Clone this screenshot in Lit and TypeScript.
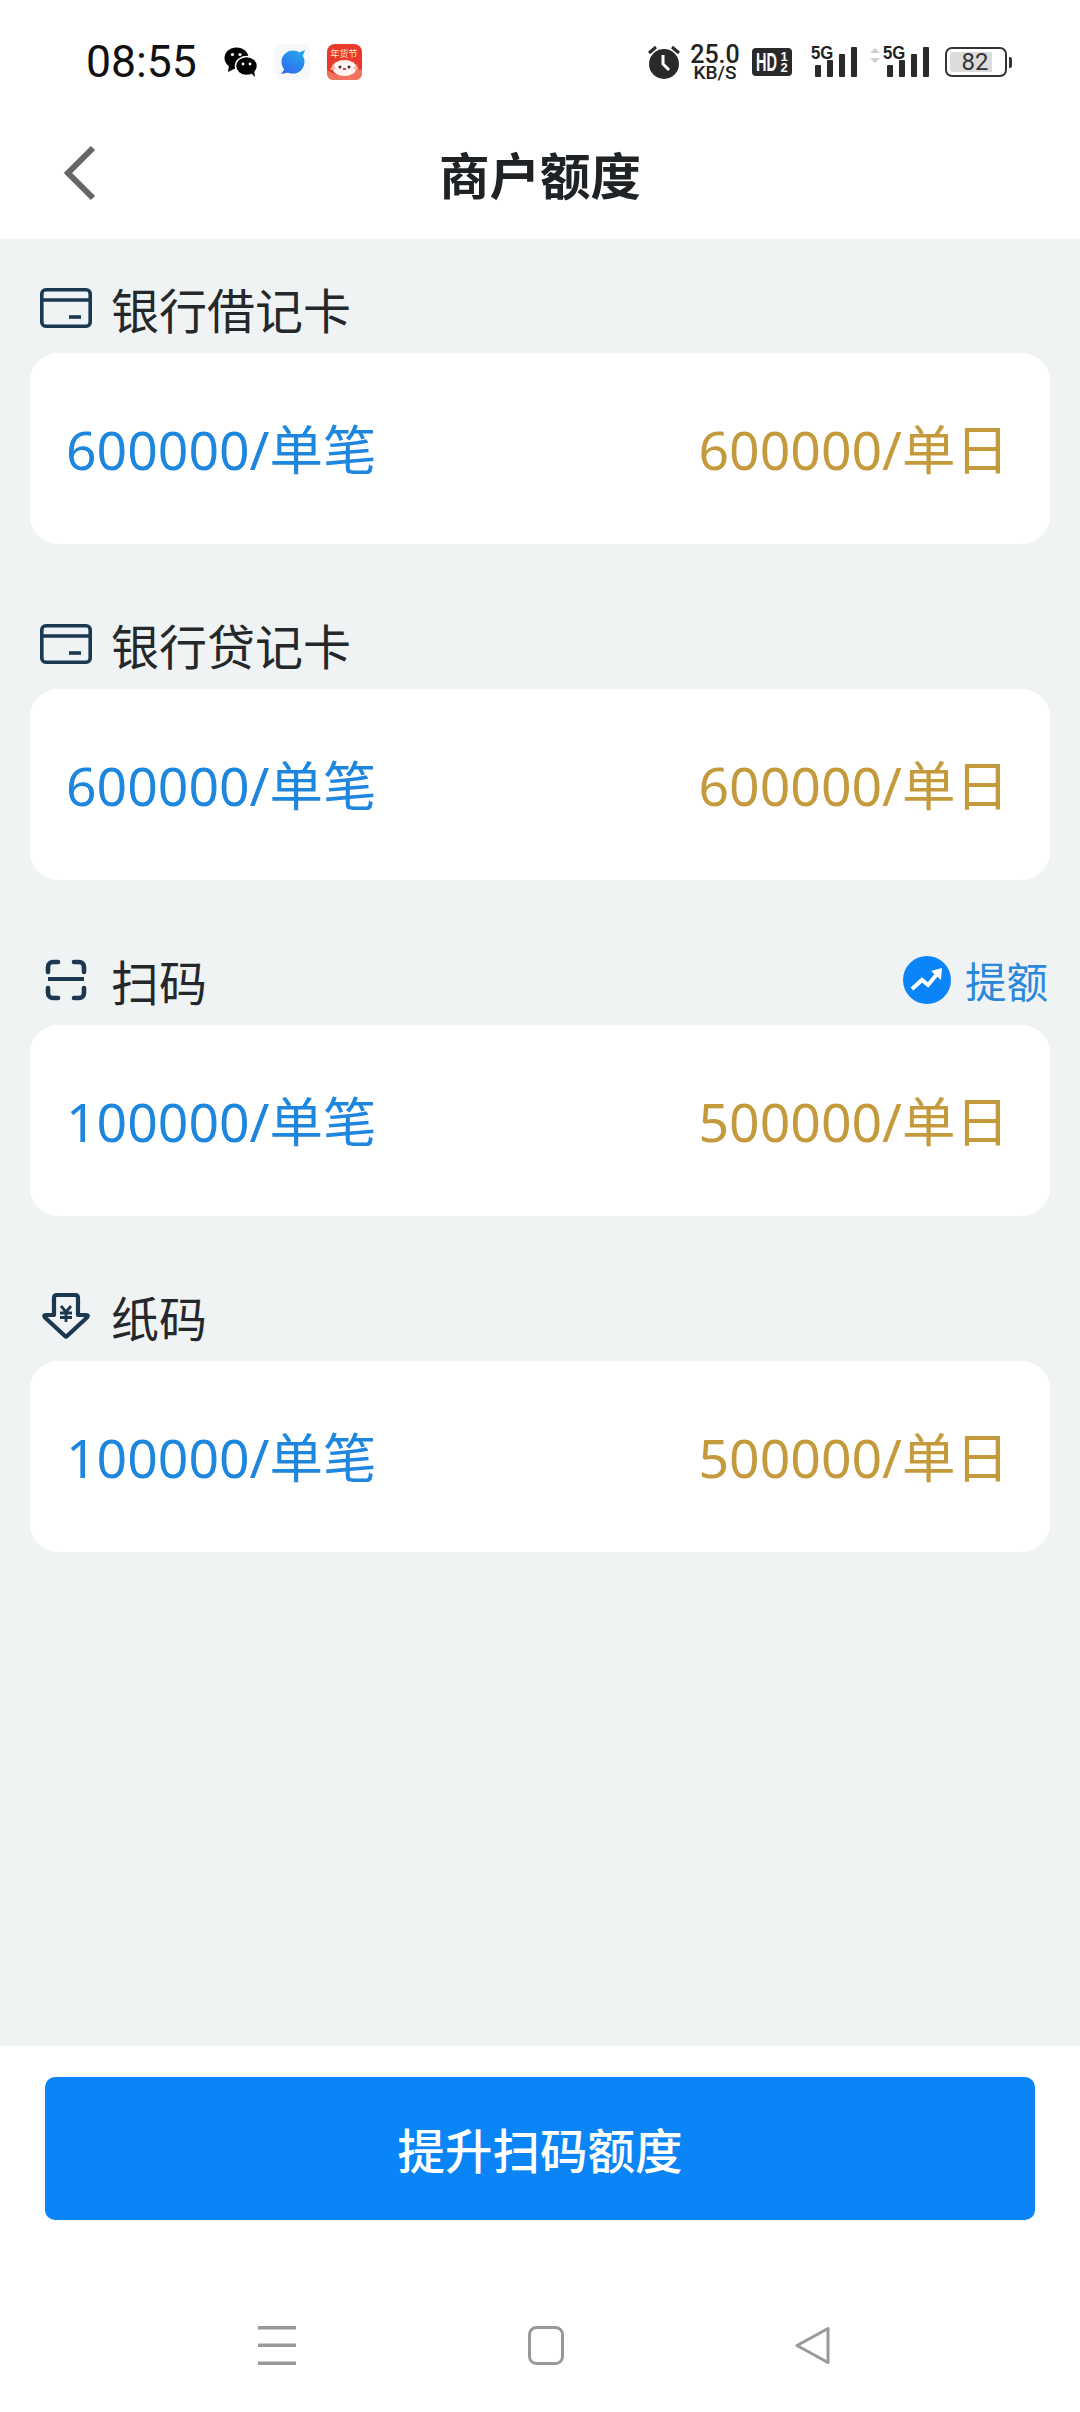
import { LitElement, html, css, svg } from "lit";
import { customElement } from "lit/decorators.js";

const cardIcon = html`<svg class="ic" width="52" height="42" viewBox="0 0 52 42" fill="none" stroke="#1c3850" stroke-width="3.6">
  <rect x="1.8" y="2.8" width="48.4" height="36.4" rx="4"/><path d="M2 13h48"/><path d="M29 30h12" stroke-width="3.6"/></svg>`;
const scanIcon = html`<svg class="ic" width="52" height="42" viewBox="0 0 52 42" fill="none" stroke="#1c3850" stroke-width="4.6" stroke-linecap="round">
  <path d="M18 3h-5a5 5 0 0 0-5 5v5M34 3h5a5 5 0 0 1 5 5v5M18 39h-5a5 5 0 0 1-5-5v-5M34 39h5a5 5 0 0 0 5-5v-5"/><path d="M8 20h36" stroke-linecap="butt" stroke-width="4"/></svg>`;
const paperIcon = html`<svg class="ic" width="52" height="50" viewBox="0 0 52 50" fill="none" stroke="#1c3850" stroke-width="4.2" stroke-linejoin="round">
  <path d="M14 24V7q0-3 3-3h18q3 0 3 3v17h8q3 0 1 2.500L27 45q-1 1-2 0L5 26.500q-2-2.500 1-2.500z"/>
  <path d="M21 15l5 6 5-6M20 22h12M20 26.500h12M26 21v10" stroke-width="2.800" stroke-linejoin="miter"/></svg>`;

const sig = (x: number) => svg`<g fill="#2a2a2a">
  <rect x="${x}" y="19" width="6" height="12" rx="1"/><rect x="${x + 12}" y="14" width="6" height="17" rx="1"/>
  <rect x="${x + 24}" y="8" width="6" height="23" rx="1"/><rect x="${x + 36}" y="1" width="6" height="30" rx="1"/></g>`;

const sections = [
  { icon: cardIcon, label: "银行借记卡", a: "600000/单笔", b: "600000/单日", up: false },
  { icon: cardIcon, label: "银行贷记卡", a: "600000/单笔", b: "600000/单日", up: false },
  { icon: scanIcon, label: "扫码", a: "100000/单笔", b: "500000/单日", up: true },
  { icon: paperIcon, label: "纸码", a: "100000/单笔", b: "500000/单日", up: false },
];

@customElement("app-root")
export class AppRoot extends LitElement {
  static styles = css`
    :host { display: flex; flex-direction: column; width: 1080px; height: 2412px; background: #fff; font-family: "Noto Sans CJK SC", "Noto Sans", sans-serif; }
    .status { height: 124px; flex: none; display: flex; align-items: center; padding: 0 68px 0 86px; box-sizing: border-box; }
    .time { font: 44.5px/1 Roboto, sans-serif; color: #111; width: 138px; }
    .apps { display: flex; align-items: center; gap: 17px; }
    .spacer { flex: 1; }
    .sys { display: flex; align-items: center; }
    .speed { display: flex; flex-direction: column; align-items: center; width: 50px; margin: 0 12px 0 10px; font-family: Roboto, sans-serif; font-weight: 500; color: #222; }
    .speed b { font-size: 25px; line-height: 20px; font-weight: 500; }
    .speed i { font-size: 19px; line-height: 15px; font-style: normal; }
    .hd { width: 40px; height: 28px; background: #2a2a2a; border-radius: 4px; color: #fff; font: 700 25px/28px "Liberation Sans", sans-serif; display: flex; justify-content: center; }
    .hd span.t { display: block; width: 21px; transform: scaleX(0.58); transform-origin: left; white-space: nowrap; }
    .hd small { font-size: 13px; line-height: 11px; display: flex; flex-direction: column; margin: 3px 0 0 3px; }
    .net-wrap { position: relative; margin-left: 18px; width: 47px; height: 32px; }
    .net-wrap.second { margin-left: 13px; width: 59px; }
    .net-wrap svg { display: block; }
    .g5 { position: absolute; top: -2px; left: 1px; font: 700 19px/17px "Liberation Sans Narrow", "Liberation Sans", sans-serif; color: #222; transform: scaleX(0.88); transform-origin: left; }
    .second .g5 { left: 13px; }
    .batt { margin-left: 16px; display: flex; align-items: center; }
    .batt-body { width: 62px; height: 30px; box-sizing: border-box; border: 2.5px solid #333; border-radius: 7px; padding: 3px; display: flex; }
    .batt-fill { width: 42px; background: #dcdcdc; color: #333; font: 24px/20px Roboto, sans-serif; text-align: center; border-radius: 2px 0 0 2px; padding-left: 8px; box-sizing: border-box; }
    .nub { width: 3px; height: 11px; background: #333; margin-left: 2px; border-radius: 0 2px 2px 0; }

    .bar { height: 115px; flex: none; display: grid; grid-template-columns: 1fr auto 1fr; align-items: center; box-sizing: border-box; padding: 0 62px 17px; }
    .bar svg { display: block; }
    h1 { margin: 0; font-size: 50.5px; line-height: 70px; font-weight: 700; color: #202326; }

    main { flex: 1; background: #f0f3f4; display: flex; flex-direction: column; gap: 60px; padding: 29px 30px 0; box-sizing: border-box; }
    .label { height: 85px; box-sizing: border-box; padding: 0 2px 5px 10px; display: flex; align-items: center; font-size: 48px; color: #25282b; }
    .ic { margin-right: 19px; display: block; flex: none; }
    .name { flex: 1; line-height: 60px; }
    .up { display: flex; align-items: center; gap: 14px; font-size: 41.5px; color: #2a88dc; }
    .up svg { margin-left: 2px; }
    .card { height: 191px; background: #fff; border-radius: 28px; display: flex; justify-content: space-between; align-items: center; box-sizing: border-box; padding: 0 41px 3px 36px; font-family: "Noto Sans", "Noto Sans CJK SC", sans-serif; font-size: 53.5px; }
    .a { color: #1f86dd; }
    .b { color: #c49a3c; }

    footer { height: 366px; flex: none; background: #fff; box-sizing: border-box; padding: 31px 45px 0; display: flex; flex-direction: column; }
    button { height: 143px; flex: none; border: 0; border-radius: 10px; background: #0a85f7; color: #fff; font: 500 47.5px "Noto Sans CJK SC", sans-serif; padding: 0; }
    .nav { display: flex; justify-content: space-between; align-items: center; padding: 0 204px 0 213px; margin-top: 106px; }
    .nav svg { display: block; }
  `;

  render() {
    return html`
      <div class="status">
        <div class="time">08:55</div>
        <div class="apps">
          <svg width="34" height="30" viewBox="0 0 34 30">
            <ellipse cx="12.5" cy="11" rx="12" ry="10.5"/><path d="M5 18l-1 7 8-4z"/>
            <ellipse cx="22.500" cy="19" rx="11" ry="9.500" stroke="#fff" stroke-width="1.500"/><path d="M27 26l4 4-1-7z"/>
            <circle cx="8.500" cy="7.500" r="1.600" fill="#fff"/><circle cx="16" cy="7.500" r="1.600" fill="#fff"/>
            <circle cx="19" cy="17" r="1.400" fill="#fff"/><circle cx="26" cy="17" r="1.400" fill="#fff"/>
          </svg>
          <svg width="35" height="36" viewBox="0 0 35 36">
            <defs><linearGradient id="pl" x1="0.800" y1="0" x2="0.200" y2="1"><stop offset="0" stop-color="#26a6ea"/><stop offset="1" stop-color="#2f6cf0"/></linearGradient></defs>
            <rect width="35" height="36" rx="5" fill="#f6f8fb"/>
            <circle cx="18" cy="18" r="11.500" fill="url(#pl)"/>
            <path d="M6 30l5-7 5 5zM30 6l-7 3 4 5z" fill="url(#pl)"/>
          </svg>
          <svg width="35" height="36" viewBox="0 0 35 36">
            <rect width="35" height="36" rx="8" fill="#e8392a"/>
            <text x="17" y="13" font-size="9" fill="#ffe9c8" text-anchor="middle" font-family="Noto Sans CJK SC">年货节</text>
            <path d="M0 26q8 6 17 4t18-5v5a6 6 0 0 1-6 6H6a6 6 0 0 1-6-6z" fill="#f2735e"/>
            <ellipse cx="17.500" cy="24" rx="12" ry="8" fill="#fff4ef"/>
            <path d="M6 20l-3 6 6-1zM29 20l3 6-6-1z" fill="#f5b5a5"/>
            <circle cx="13" cy="23" r="1.500" fill="#333"/><circle cx="22" cy="23" r="1.500" fill="#333"/><rect x="16" y="24" width="3" height="2" fill="#e8392a"/>
          </svg>
        </div>
        <div class="spacer"></div>
        <div class="sys">
          <svg width="32" height="34" viewBox="0 0 32 34">
            <circle cx="16" cy="19" r="15" fill="#2a2a2a"/>
            <path d="M1 8l7-6M31 8l-7-6" stroke="#2a2a2a" stroke-width="3"/>
            <path d="M15 10v9l6 6" stroke="#fff" stroke-width="3" fill="none"/>
          </svg>
          <div class="speed"><b>25.0</b><i>KB/S</i></div>
          <div class="hd"><span class="t">HD</span><small><span>1</span><span>2</span></small></div>
          <div class="net-wrap">
            <svg width="47" height="32" viewBox="0 0 47 32">${sig(5)}</svg>
            <span class="g5">5G</span>
          </div>
          <div class="net-wrap second">
            <svg width="59" height="32" viewBox="0 0 59 32">
              <path d="M5 2l5 5H0zM5 17l5-5H0z" fill="#cfcfcf"/>${sig(17)}
            </svg>
            <span class="g5">5G</span>
          </div>
          <div class="batt">
            <div class="batt-body"><div class="batt-fill">82</div></div>
            <div class="nub"></div>
          </div>
        </div>
      </div>

      <div class="bar">
        <svg width="35" height="56" viewBox="0 0 35 56" fill="none" stroke="#666" stroke-width="6"><path d="M31 3L6 28l25 25"/></svg>
        <h1>商户额度</h1>
        <span></span>
      </div>

      <main>
        ${sections.map((s) => html`
          <section>
            <div class="label">
              ${s.icon}
              <span class="name">${s.label}</span>
              ${s.up ? html`<span class="up">
                <svg width="48" height="48" viewBox="0 0 48 48">
                  <circle cx="24" cy="24" r="24" fill="#0a85f7"/>
                  <path d="M9 33l10-9 6 5 10-12" fill="none" stroke="#fff" stroke-width="4"/>
                  <path d="M28 15l11-3-1 12z" fill="#fff"/>
                </svg>提额</span>` : ""}
            </div>
            <div class="card"><span class="a">${s.a}</span><span class="b">${s.b}</span></div>
          </section>`)}
      </main>

      <footer>
        <button>提升扫码额度</button>
        <div class="nav">
          <svg width="38" height="39" viewBox="0 0 38 39" fill="#999"><rect y="0" width="38" height="3.500"/><rect y="17.500" width="38" height="3.500"/><rect y="35.500" width="38" height="3.500"/></svg>
          <svg width="36" height="39" viewBox="0 0 36 39" fill="none" stroke="#999" stroke-width="3"><rect x="1.500" y="1.500" width="33" height="36" rx="7"/></svg>
          <svg width="36" height="39" viewBox="0 0 36 39" fill="none" stroke="#999" stroke-width="3" stroke-linejoin="round"><path d="M33 2.500v34L2 19.500z"/></svg>
        </div>
      </footer>
    `;
  }
}
